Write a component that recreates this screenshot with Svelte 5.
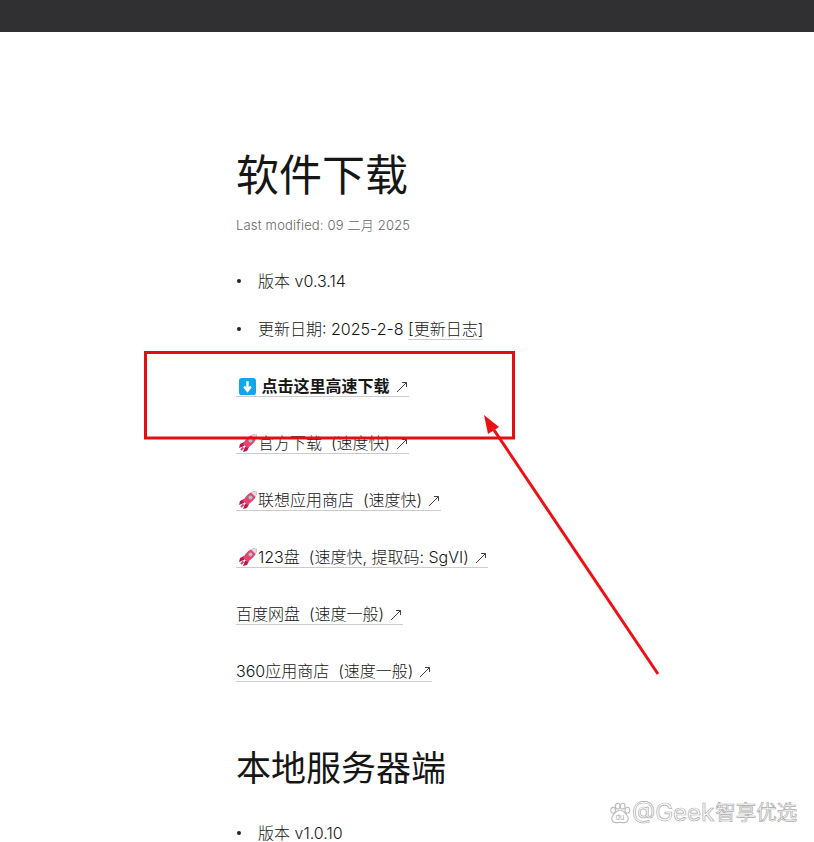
<script>
  const links = [
    { icon: 'rocket', text: '官方下载\u00a0\u00a0(速度快)' },
    { icon: 'rocket', text: '联想应用商店\u00a0\u00a0(速度快)' },
    { icon: 'rocket', text: '123盘\u00a0\u00a0(速度快, 提取码: SgVI)' },
    { icon: '', text: '百度网盘\u00a0\u00a0(速度一般)' },
    { icon: '', text: '360应用商店\u00a0\u00a0(速度一般)' }
  ];
</script>

{#snippet rocket()}
  <svg class="emoji" viewBox="0 0 20 20" aria-hidden="true">
    <path d="M6 9 L2 11 L1 15 L6 13 Z" fill="#b5194f" />
    <path d="M11 14 L9 18 L5 19 L7 14 Z" fill="#b5194f" />
    <path d="M5 11 C8 5 13 1 19 1 C19 7 15 12 9 15 Z" fill="#e8436f" />
    <path d="M13 2.500 C15 1.500 17 1 19 1 C19 3 18.500 5 17.500 7 Z" fill="#d8dde3" />
    <circle cx="12.500" cy="7.500" r="2" fill="#a9c4d6" />
    <path d="M3 17 L5.500 14.500" stroke="#e8436f" stroke-width="2" />
  </svg>
{/snippet}

{#snippet outArrow()}
  <svg class="out" viewBox="0 0 12 12" aria-hidden="true">
    <path d="M1 11 L10.500 1.500 M6 1.500 H10.500 V6" stroke="#444" stroke-width="1" fill="none" />
  </svg>
{/snippet}

<div class="topbar"></div>

<main class="content">
  <h1>软件下载</h1>
  <p class="modified">Last modified: 09 二月 2025</p>

  <ul>
    <li>版本 v0.3.14</li>
    <li>更新日期: 2025-2-8 <a href="#log">[更新日志]</a></li>
  </ul>

  <p class="row first">
    <a href="#fast" class="strong">
      <svg class="emoji down" viewBox="0 0 18 18" aria-hidden="true">
        <rect width="18" height="18" rx="3" fill="#12a5e8" />
        <path d="M9 3.500 V12 M5.500 9 L9 13.500 L12.500 9" stroke="#fff" stroke-width="2.600" fill="none" />
      </svg>
      <b>点击这里高速下载</b>{@render outArrow()}
    </a>
  </p>

  {#each links as link}
    <p class="row">
      <a href="#dl">
        {#if link.icon}{@render rocket()}{/if}<span>{link.text}</span>{@render outArrow()}
      </a>
    </p>
  {/each}

  <h2>本地服务器端</h2>
  <ul class="tight">
    <li>版本 v1.0.10</li>
  </ul>
</main>

<svg class="marks" viewBox="0 0 814 842" aria-hidden="true">
  <rect x="145.500" y="352.500" width="368" height="85.500" fill="none" stroke="#e60d12" stroke-width="3" />
  <path d="M658 674 L494 430" stroke="#ee1014" stroke-width="3" />
  <path d="M484 415 L499 427 L488 434 Z" fill="#ee1014" />
</svg>

<div class="watermark">
  <svg class="paw" viewBox="0 0 24 24" aria-hidden="true">
    <g fill="#fff" stroke="#bbb" stroke-width="1.200">
      <ellipse cx="4.500" cy="9" rx="2.600" ry="3.200" />
      <ellipse cx="9.500" cy="4.500" rx="2.600" ry="3.200" />
      <ellipse cx="15" cy="4.500" rx="2.600" ry="3.200" />
      <ellipse cx="20" cy="9" rx="2.600" ry="3.200" />
      <path d="M12 9 C8 9 3 15 3 18 C3 23 8 23 12 22 C16 23 21 23 21 18 C21 15 16 9 12 9 Z" />
    </g>
    <text x="12" y="20" text-anchor="middle" font-size="8" font-family="Inter, sans-serif" fill="#aaa" stroke="none">du</text>
  </svg>
  <span class="handle">@Geek</span><span>智享优选</span>
</div>

<style>
  :global(body) {
    background: #fff;
  }

  .topbar {
    height: 32px;
    background: #303032;
  }

  .content {
    position: relative;
    padding: 110px 0 0 236px;
    height: 700px;
    overflow: hidden;
    color: #161616;
    font-family: Inter, "Noto Sans CJK SC", sans-serif;
    font-size: 16px;
    font-weight: 300;
    line-height: 24px;
  }

  h1 {
    margin: 0;
    font-size: 43px;
    font-weight: 400;
    line-height: 66px;
  }

  h2 {
    margin: 57px 0 0;
    font-size: 35px;
    font-weight: 400;
    line-height: 56px;
  }

  .modified {
    margin: 7px 0 0;
    font-size: 13px;
    line-height: 20px;
    letter-spacing: 0.18px;
    color: #666;
  }

  ul {
    list-style: none;
    margin: 34px 0 0;
    padding: 0;
  }

  ul.tight {
    margin-top: 25px;
  }

  li {
    position: relative;
    padding-left: 22px;
    height: 24px;
    margin-bottom: 24px;
  }

  li::before {
    content: '';
    position: absolute;
    left: 1px;
    top: 10px;
    width: 4px;
    height: 4px;
    border-radius: 50%;
    background: #222;
  }

  a {
    color: inherit;
    text-decoration: none;
    border-bottom: 1px solid #ccc;
  }

  .row {
    margin: 33px 0 0;
    height: 24px;
  }

  .row.first {
    margin-top: 33px;
  }

  .strong b {
    font-weight: 700;
    margin-left: 1px;
  }

  .emoji {
    display: inline-block;
    width: 20px;
    height: 20px;
    margin-left: 2px;
    vertical-align: -4px;
  }

  .down {
    width: 17px;
    height: 17px;
    margin-left: 3px;
    vertical-align: -3px;
  }

  .out {
    display: inline-block;
    width: 12px;
    height: 12px;
    margin-left: 6px;
    margin-right: 1px;
    vertical-align: -1px;
  }

  .marks {
    position: absolute;
    inset: 0 auto auto 0;
    width: 814px;
    height: 842px;
    pointer-events: none;
  }

  .watermark {
    position: absolute;
    left: 609px;
    top: 800px;
    display: flex;
    align-items: center;
    gap: 1px;
    font-family: Inter, "Noto Sans CJK SC", sans-serif;
    font-size: 20.5px;
    line-height: 26px;
    color: #fff;
    -webkit-text-stroke: 0.7px #aaa;
  }

  .handle {
    font-size: 24px;
  }

  .paw {
    width: 22px;
    height: 22px;
  }
</style>
